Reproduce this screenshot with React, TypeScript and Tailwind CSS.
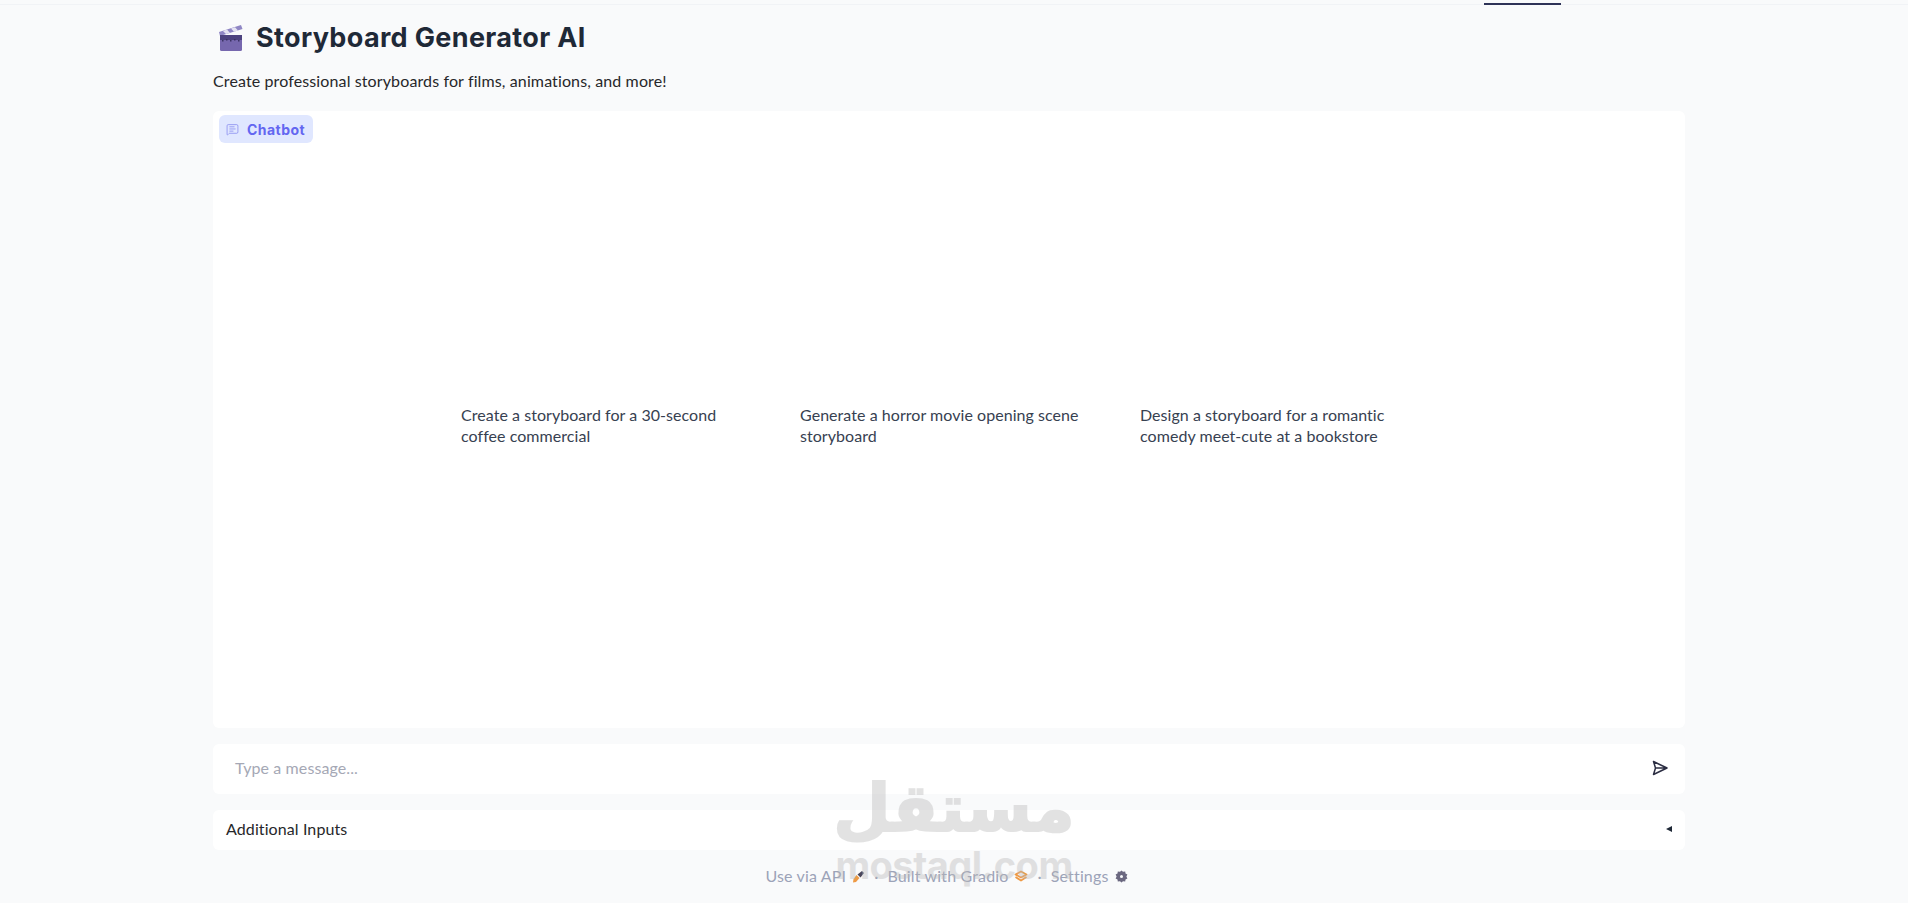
import { MessageSquareText } from "lucide-react"

const suggestions = [
  "Create a storyboard for a 30-second coffee commercial",
  "Generate a horror movie opening scene storyboard",
  "Design a storyboard for a romantic comedy meet-cute at a bookstore",
]

function Clapper() {
  return (
    <svg width="26" height="28" viewBox="0 0 26 28" className="shrink-0">
      <path d="M1 8 L23 1 L24.5 5 L2 12 Z" fill="#8f86c4" />
      <path d="M5 7 L9 5.6 L12 9 L8 10 Z M13 4.4 L17 3.2 L20 6.6 L16 7.8 Z" fill="#e4e2f2" />
      <rect x="2" y="11" width="22" height="16" rx="1.5" fill="#7667ae" />
      <rect x="2" y="11" width="22" height="5" fill="#4d437f" />
      <path d="M4 16h1.5v1.5H4zM8 15h1.5v1.5H8zM12 16h1.5v1.5H12zM16 15h1.5v1.5H16zM20 16h1.5v1.5H20z" fill="#3a3263" />
    </svg>
  )
}

function Rocket() {
  return (
    <svg width="13" height="13" viewBox="0 0 13 13" className="shrink-0">
      <path d="M5.5 4.5 L10 1 L12 3 L8.5 7.5 Z" fill="#4b4658" />
      <path d="M4.5 5 L7.5 8 L4 12 L1 12.5 L1.5 9 Z" fill="#ee9a45" />
    </svg>
  )
}

function GradioLogo() {
  return (
    <svg width="14" height="13" viewBox="0 0 14 13" fill="none" className="shrink-0">
      <path d="M7 1.5 L12.5 4.5 L7 7.5 L1.5 4.5 Z" stroke="#ee9a45" strokeWidth="1.8" strokeLinejoin="round" />
      <path d="M1.5 7 L7 10.5 L12.5 7" stroke="#ee9a45" strokeWidth="1.8" strokeLinejoin="round" />
    </svg>
  )
}

function Gear() {
  return (
    <svg width="13" height="13" viewBox="0 0 13 13" className="shrink-0">
      <path
        fillRule="evenodd"
        d="M6.5 0.5 L8 1.8 L10.2 1.6 L10.5 3.5 L12.4 4.6 L11.4 6.5 L12.4 8.4 L10.5 9.5 L10.2 11.4 L8 11.2 L6.5 12.5 L5 11.2 L2.8 11.4 L2.5 9.5 L0.6 8.4 L1.6 6.5 L0.6 4.6 L2.5 3.5 L2.8 1.6 L5 1.8 Z M6.5 5 A1.5 1.5 0 1 0 6.5 8 A1.5 1.5 0 1 0 6.5 5 Z"
        fill="#6b6880"
      />
    </svg>
  )
}

export default function App() {
  return (
    <div className="relative h-[903px] overflow-hidden bg-[#f9fafb] font-['Lato',sans-serif] text-[#27272a]">
      {/* top tab strip */}
      <div className="h-[5px] border-b border-[#f1f3f6]">
        <div className="ml-[1484px] h-[5px] w-[77px] border-b-2 border-[#2e3357]" />
      </div>

      <main className="ml-[213px] flex w-[1472px] flex-col">
        <h1 className="mt-[18px] flex h-[30px] items-center gap-[12px] pl-[5px] font-['Inter',sans-serif] text-[27px] font-bold leading-[30px] tracking-[0.35px] text-[#1f2937]">
          <Clapper />
          Storyboard Generator AI
        </h1>
        <p className="mt-[16px] h-[24px] text-[16px] leading-[24px] tracking-[0.12px] text-[#27272a]">
          Create professional storyboards for films, animations, and more!
        </p>

        {/* chatbot panel */}
        <section className="relative mt-[18px] flex h-[617px] items-center rounded-[6px] bg-white pl-[248px] pt-[11px]">
          <div className="absolute left-[6px] top-[4px] flex h-[28px] items-center gap-[8px] rounded-[6px] bg-[#e0e7ff] pl-[7px] pr-[8px] font-['Inter',sans-serif] text-[14px] font-bold tracking-[0.45px] text-[#6366f1]">
            <MessageSquareText size={13} strokeWidth={1.5} className="text-[#8b8ff0]" />
            Chatbot
          </div>
          <div className="grid grid-cols-[339px_340px_339px]">
            {suggestions.map((text) => (
              <div key={text} className="w-[288px] text-[16px] leading-[21px] tracking-[0.05px] text-[#374151]">
                {text}
              </div>
            ))}
          </div>
        </section>

        {/* message box */}
        <div className="mt-[16px] flex h-[50px] items-center justify-between rounded-[6px] bg-white pb-[2px] pl-[22px] pr-[17px]">
          <span className="text-[16px] tracking-[0.1px] text-[#a5a8b5]">Type a message...</span>
          <svg width="16" height="16" viewBox="0 0 16 16" fill="none" stroke="#2b2d42" strokeWidth="1.5" strokeLinejoin="round">
            <path d="M1.5 1.5 L15 8 L1.5 14.5 L3.5 8 Z M3.5 8 H15" />
          </svg>
        </div>

        {/* accordion */}
        <div className="mt-[16px] flex h-[40px] items-center justify-between rounded-[6px] bg-white pb-[2px] pl-[13px] pr-[13px]">
          <span className="text-[16px] tracking-[0.1px] text-[#27272a]">Additional Inputs</span>
          <span className="h-0 w-0 border-y-[3px] border-r-[6px] border-y-transparent border-r-[#1f2937]" />
        </div>

        <footer className="mt-[16px] flex items-center justify-center gap-[9px] pr-[5px] text-[16px] leading-[20px] tracking-[0.15px] text-[#9ca3b8]">
          <span className="flex items-center gap-[6px]">Use via API <Rocket /></span>
          <span>·</span>
          <span className="flex items-center gap-[6px]">Built with Gradio <GradioLogo /></span>
          <span>·</span>
          <span className="flex items-center gap-[6px]">Settings <Gear /></span>
        </footer>
      </main>

      {/* site watermark */}
      <div className="pointer-events-none absolute left-[838px] top-[770px] flex w-[232px] flex-col items-center text-[#b9b9b9] opacity-40">
        <span className="font-['DejaVu_Sans',sans-serif] text-[66px] font-bold leading-[77px] [-webkit-text-stroke:2px_#b9b9b9]">مستقل</span>
        <span className="whitespace-nowrap font-['Inter',sans-serif] text-[38px] font-bold leading-[36px] tracking-[-0.5px]">mostaql.com</span>
      </div>
    </div>
  )
}
